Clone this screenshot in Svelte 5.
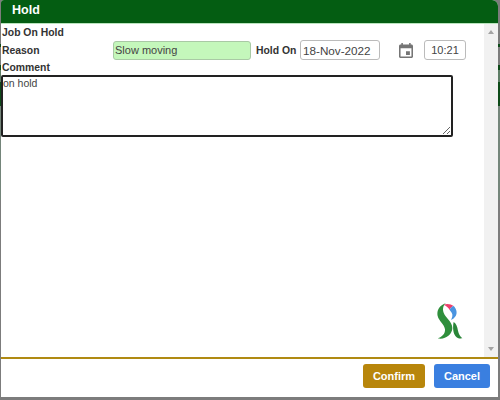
<script>
	let reason = 'Slow moving';
	let holdDate = '18-Nov-2022';
	let holdTime = '10:21';
	let comment = 'on hold';
</script>

<div class="dialog">
	<header class="title">Hold</header>

	<div class="middle">
		<div class="content">
			<div class="label job">Job On Hold</div>

			<div class="row">
				<span class="label reason-label">Reason</span>
				<input class="field reason" value={reason} />
				<span class="label hold-label">Hold On</span>
				<input class="field date" value={holdDate} />
				<svg class="cal" viewBox="3 2 18 20" preserveAspectRatio="none" aria-hidden="true">
					<path
						fill="#757575"
						d="M19 4h-1V2h-2v2H8V2H6v2H5C3.9 4 3 4.9 3 6v14c0 1.1.9 2 2 2h14c1.1 0 2-.9 2-2V6c0-1.1-.9-2-2-2zm0 16H5V9h14v11zm-7-7h5v5h-5z"
					/>
				</svg>
				<input class="field time" value={holdTime} />
			</div>

			<div class="label comment-label">Comment</div>
			<textarea class="comment" value={comment}></textarea>

			<svg class="logo" viewBox="52 18 78 114" aria-hidden="true">
				<path fill="#2f8f3c" d="M78 22C60 28 50 44 54 60C58 76 74 84 76 100C77 112 68 122 54 127C76 132 98 116 98 96C98 76 78 66 72 50C68 40 70 30 78 22Z" />
				<path fill="#2a8538" d="M102 78C109 82 113 92 115 104C117 114 121 120 128 127C112 130 103 118 101 104C100 96 100 86 102 78Z" />
				<path fill="#ee3f6c" d="M72 26C82 22 94 24 102 30C96 32 92 36 90 42C86 34 80 30 72 26Z" />
				<path fill="#4a94e0" d="M102 30C110 38 114 50 108 60C104 66 100 70 94 72C98 64 100 56 96 50L90 42C92 36 96 32 102 30Z" />
			</svg>
		</div>

		<div class="scrollbar">
			<span class="arrow up"></span>
			<span class="arrow down"></span>
		</div>
	</div>

	<footer class="footer">
		<button class="btn confirm">Confirm</button>
		<button class="btn cancel">Cancel</button>
	</footer>
</div>

<style>
	:global(body) {
		height: 400px;
		overflow: hidden;
		background:
			linear-gradient(
				to bottom,
				transparent 44px,
				#0d4a18 44px,
				#0d4a18 47px,
				transparent 47px,
				transparent 65px,
				#0d4a18 65px,
				#0d4a18 70px,
				#5e7d66 70px,
				#5e7d66 82px,
				#0d4a18 82px,
				#0d4a18 106px,
				#74857a 106px,
				#74857a 200px,
				#7c7c7c 200px
			);
		background-color: #7c7c7c;
	}

	.dialog {
		width: 497px;
		height: 397px;
		margin-left: 1px;
		background: #fff;
		display: flex;
		flex-direction: column;
		border-radius: 3px 6px 0 0;
		overflow: hidden;
		font-family: 'Liberation Sans', Arial, sans-serif;
	}

	.title {
		height: 23px;
		flex: none;
		box-sizing: content-box;
		background: #045d12;
		border-bottom: 1px solid #b9e4bd;
		color: #fff;
		font-size: 12.5px;
		font-weight: bold;
		line-height: 21px;
		padding-left: 11px;
	}

	.middle {
		flex: 1;
		display: flex;
		min-height: 0;
	}

	.content {
		flex: 1;
		position: relative;
		color: #333;
	}

	.label {
		font-size: 10.4px;
		font-weight: bold;
		color: #333;
	}

	.job {
		line-height: 15px;
		padding: 1px 0 0 1px;
	}

	.row {
		display: flex;
		align-items: center;
		height: 20px;
		padding-left: 1px;
	}

	.reason-label {
		width: 111px;
	}

	.field {
		box-sizing: border-box;
		height: 20px;
		font-family: inherit;
		font-size: 11px;
		color: #444;
		background: #fff;
		border: 1px solid #bbb;
		border-radius: 3px;
		padding: 0 1px;
		outline: none;
	}

	.reason {
		width: 138px;
		height: 19px;
		background: #c4f7bb;
		border-color: #a9c9a5;
	}

	.hold-label {
		margin-left: 5px;
		width: 44px;
	}

	.date {
		width: 80px;
		padding-left: 2px;
		font-size: 11.7px;
	}

	.cal {
		width: 14px;
		height: 15px;
		margin-left: 19px;
	}

	.time {
		width: 42px;
		margin-left: 11px;
		text-align: center;
	}

	.comment-label {
		line-height: 14px;
		margin-top: 1px;
		padding-left: 1px;
	}

	.comment {
		display: block;
		box-sizing: border-box;
		width: 452px;
		height: 62px;
		margin: 0;
		padding: 0;
		border: 2px solid #222;
		border-radius: 2px;
		outline: none;
		font-family: inherit;
		font-size: 10.5px;
		color: #444;
		background: #fff;
	}

	.logo {
		position: absolute;
		left: 436px;
		top: 278px;
		width: 26px;
		height: 38px;
	}

	.scrollbar {
		width: 14px;
		flex: none;
		background: #f1f1f1;
		display: flex;
		flex-direction: column;
		justify-content: space-between;
		align-items: center;
		padding: 6px 0;
		box-sizing: border-box;
	}

	.arrow {
		width: 0;
		height: 0;
		border-left: 3.5px solid transparent;
		border-right: 3.5px solid transparent;
	}

	.up {
		border-bottom: 4px solid #a3a3a3;
	}

	.down {
		border-top: 4px solid #a3a3a3;
	}

	.footer {
		flex: none;
		border-top: 2px solid #b08a12;
		display: flex;
		justify-content: flex-end;
		gap: 9px;
		padding: 5px 8px 0 0;
		box-sizing: border-box;
		height: 40px;
	}

	.btn {
		height: 24px;
		border: none;
		border-radius: 3px;
		color: #fff;
		font-family: inherit;
		font-size: 11px;
		font-weight: bold;
		padding: 0;
	}

	.confirm {
		width: 62px;
		background: #b8860b;
	}

	.cancel {
		width: 56px;
		background: #3a7fe0;
	}
</style>
